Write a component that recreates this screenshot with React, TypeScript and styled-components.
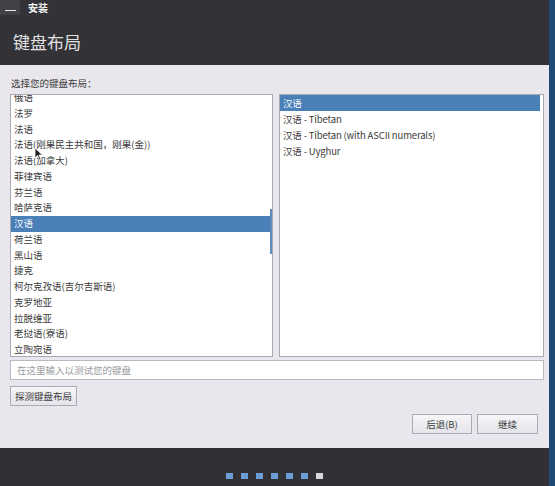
import React from "react";
import styled, { createGlobalStyle } from "styled-components";

const Global = createGlobalStyle`
  html, body { margin: 0; padding: 0; }
  body {
    background: #1e4a74;
    font-family: "Noto Sans CJK SC", "Noto Sans", sans-serif;
    width: 555px;
    height: 486px;
    overflow: hidden;
  }
`;

const Window = styled.div`
  width: 549px;
  height: 486px;
  display: flex;
  flex-direction: column;
  background: #e9e7ed;
`;

const Header = styled.div`
  height: 65px;
  background: #333337;
  display: flex;
  flex-direction: column;
`;

const TitleBar = styled.div`
  height: 18px;
  display: flex;
  align-items: center;
  gap: 8px;
`;

const MinButton = styled.div`
  width: 20px;
  height: 15px;
  align-self: flex-start;
  background: #414147;
  display: flex;
  align-items: flex-end;
  justify-content: center;
  padding-bottom: 4px;
  box-sizing: border-box;
  &::after {
    content: "";
    width: 11px;
    height: 1px;
    background: #e8e8e8;
  }
`;

const TitleText = styled.span`
  color: #f2f2f2;
  font-size: 10px;
  font-weight: 700;
  line-height: 1;
  margin-top: -2px;
`;

const Heading = styled.h1`
  margin: 0;
  padding: 13px 0 0 13px;
  font-size: 17px;
  font-weight: 400;
  color: #e2e2e4;
  line-height: 22px;
`;

const Content = styled.div`
  flex: 1;
  display: flex;
  flex-direction: column;
  padding: 11px 5px 14px 10px;
`;

const Label = styled.div`
  font-size: 9.5px;
  color: #3a3a3a;
  line-height: 14px;
  padding-left: 1px;
  margin-bottom: 4px;
`;

const Lists = styled.div`
  display: grid;
  grid-template-columns: 263px 265px;
  gap: 6px;
  height: 263px;
`;

const ListBox = styled.div`
  position: relative;
  background: #ffffff;
  border: 1px solid #a9a9b2;
  overflow: hidden;
`;

const ListInner = styled.div<{ $offset: number }>`
  margin-top: ${(p) => p.$offset}px;
`;

const Row = styled.div<{ $selected?: boolean; $h: number; $right?: boolean }>`
  height: ${(p) => p.$h}px;
  line-height: ${(p) => p.$h}px;
  font-size: 9.5px;
  letter-spacing: ${(p) => (p.$right ? "-0.15px" : "0")};
  padding-left: 3px;
  margin-right: ${(p) => (p.$right ? 3 : 2)}px;
  white-space: nowrap;
  color: ${(p) => (p.$selected ? "#ffffff" : "#3a3a3a")};
  background: ${(p) => (p.$selected ? "#4a80b8" : "transparent")};
`;

const ScrollThumb = styled.div`
  position: absolute;
  right: 0;
  top: 114px;
  width: 2px;
  height: 45px;
  background: #5d8cbd;
`;

const Cursor = styled.svg`
  position: absolute;
  left: 23px;
  top: 52px;
`;

const TestInput = styled.input`
  margin-top: 3px;
  height: 20px;
  box-sizing: border-box;
  border: 1px solid #b9b9c2;
  background: #ffffff;
  font-family: inherit;
  font-size: 9.5px;
  line-height: 18px;
  padding: 0 6px;
  outline: none;
  &::placeholder { color: #9a9a9e; }
`;

const Btn = styled.button<{ $w: number }>`
  width: ${(p) => p.$w}px;
  height: 20px;
  box-sizing: border-box;
  border: 1px solid #a7adb6;
  background: linear-gradient(#f6f6f8, #e4e4ea);
  font-family: inherit;
  font-size: 9.5px;
  color: #3c3c3c;
  padding: 0;
  cursor: default;
`;

const DetectRow = styled.div`
  margin-top: 6px;
  display: flex;
`;

const NavRow = styled.div`
  margin-top: auto;
  display: flex;
  justify-content: flex-end;
  gap: 5px;
  padding-right: 6px;
`;

const Footer = styled.div`
  height: 38px;
  background: #313135;
  display: flex;
  align-items: flex-start;
  justify-content: center;
  gap: 8px;
  padding-top: 25px;
  box-sizing: border-box;
`;

const Dot = styled.span<{ $active?: boolean }>`
  width: 7px;
  height: 6px;
  background: ${(p) => (p.$active ? "#d9d9dc" : "#6b9ed6")};
`;

const leftItems = [
  "俄语",
  "法罗",
  "法语",
  "法语(刚果民主共和国，刚果(金))",
  "法语(加拿大)",
  "菲律宾语",
  "芬兰语",
  "哈萨克语",
  "汉语",
  "荷兰语",
  "黑山语",
  "捷克",
  "柯尔克孜语(吉尔吉斯语)",
  "克罗地亚",
  "拉脱维亚",
  "老挝语(寮语)",
  "立陶宛语",
  "卢森堡语",
];

const rightItems = [
  "汉语",
  "汉语 - Tibetan",
  "汉语 - Tibetan (with ASCII numerals)",
  "汉语 - Uyghur",
];

export default function App() {
  return (
    <>
      <Global />
      <Window>
        <Header>
          <TitleBar>
            <MinButton />
            <TitleText>安装</TitleText>
          </TitleBar>
          <Heading>键盘布局</Heading>
        </Header>
        <Content>
          <Label>选择您的键盘布局：</Label>
          <Lists>
            <ListBox>
              <ListInner $offset={-5}>
                {leftItems.map((t) => (
                  <Row key={t} $h={15.75} $selected={t === "汉语"}>
                    {t}
                  </Row>
                ))}
              </ListInner>
              <ScrollThumb />
              <Cursor width="10" height="14" viewBox="0 0 10 14">
                <path d="M1 1 L1 11 L3.5 8.5 L5.5 13 L7 12.3 L5 8 L8.5 8 Z" fill="#222" stroke="#fff" strokeWidth="0.8" />
              </Cursor>
            </ListBox>
            <ListBox>
              <ListInner $offset={0}>
                {rightItems.map((t, i) => (
                  <Row key={t} $h={16} $right $selected={i === 0}>
                    {t}
                  </Row>
                ))}
              </ListInner>
            </ListBox>
          </Lists>
          <TestInput placeholder="在这里输入以测试您的键盘" />
          <DetectRow>
            <Btn $w={67}>探测键盘布局</Btn>
          </DetectRow>
          <NavRow>
            <Btn $w={60}>后退(B)</Btn>
            <Btn $w={61}>继续</Btn>
          </NavRow>
        </Content>
        <Footer>
          {[0, 1, 2, 3, 4, 5].map((i) => (
            <Dot key={i} />
          ))}
          <Dot $active />
        </Footer>
      </Window>
    </>
  );
}
